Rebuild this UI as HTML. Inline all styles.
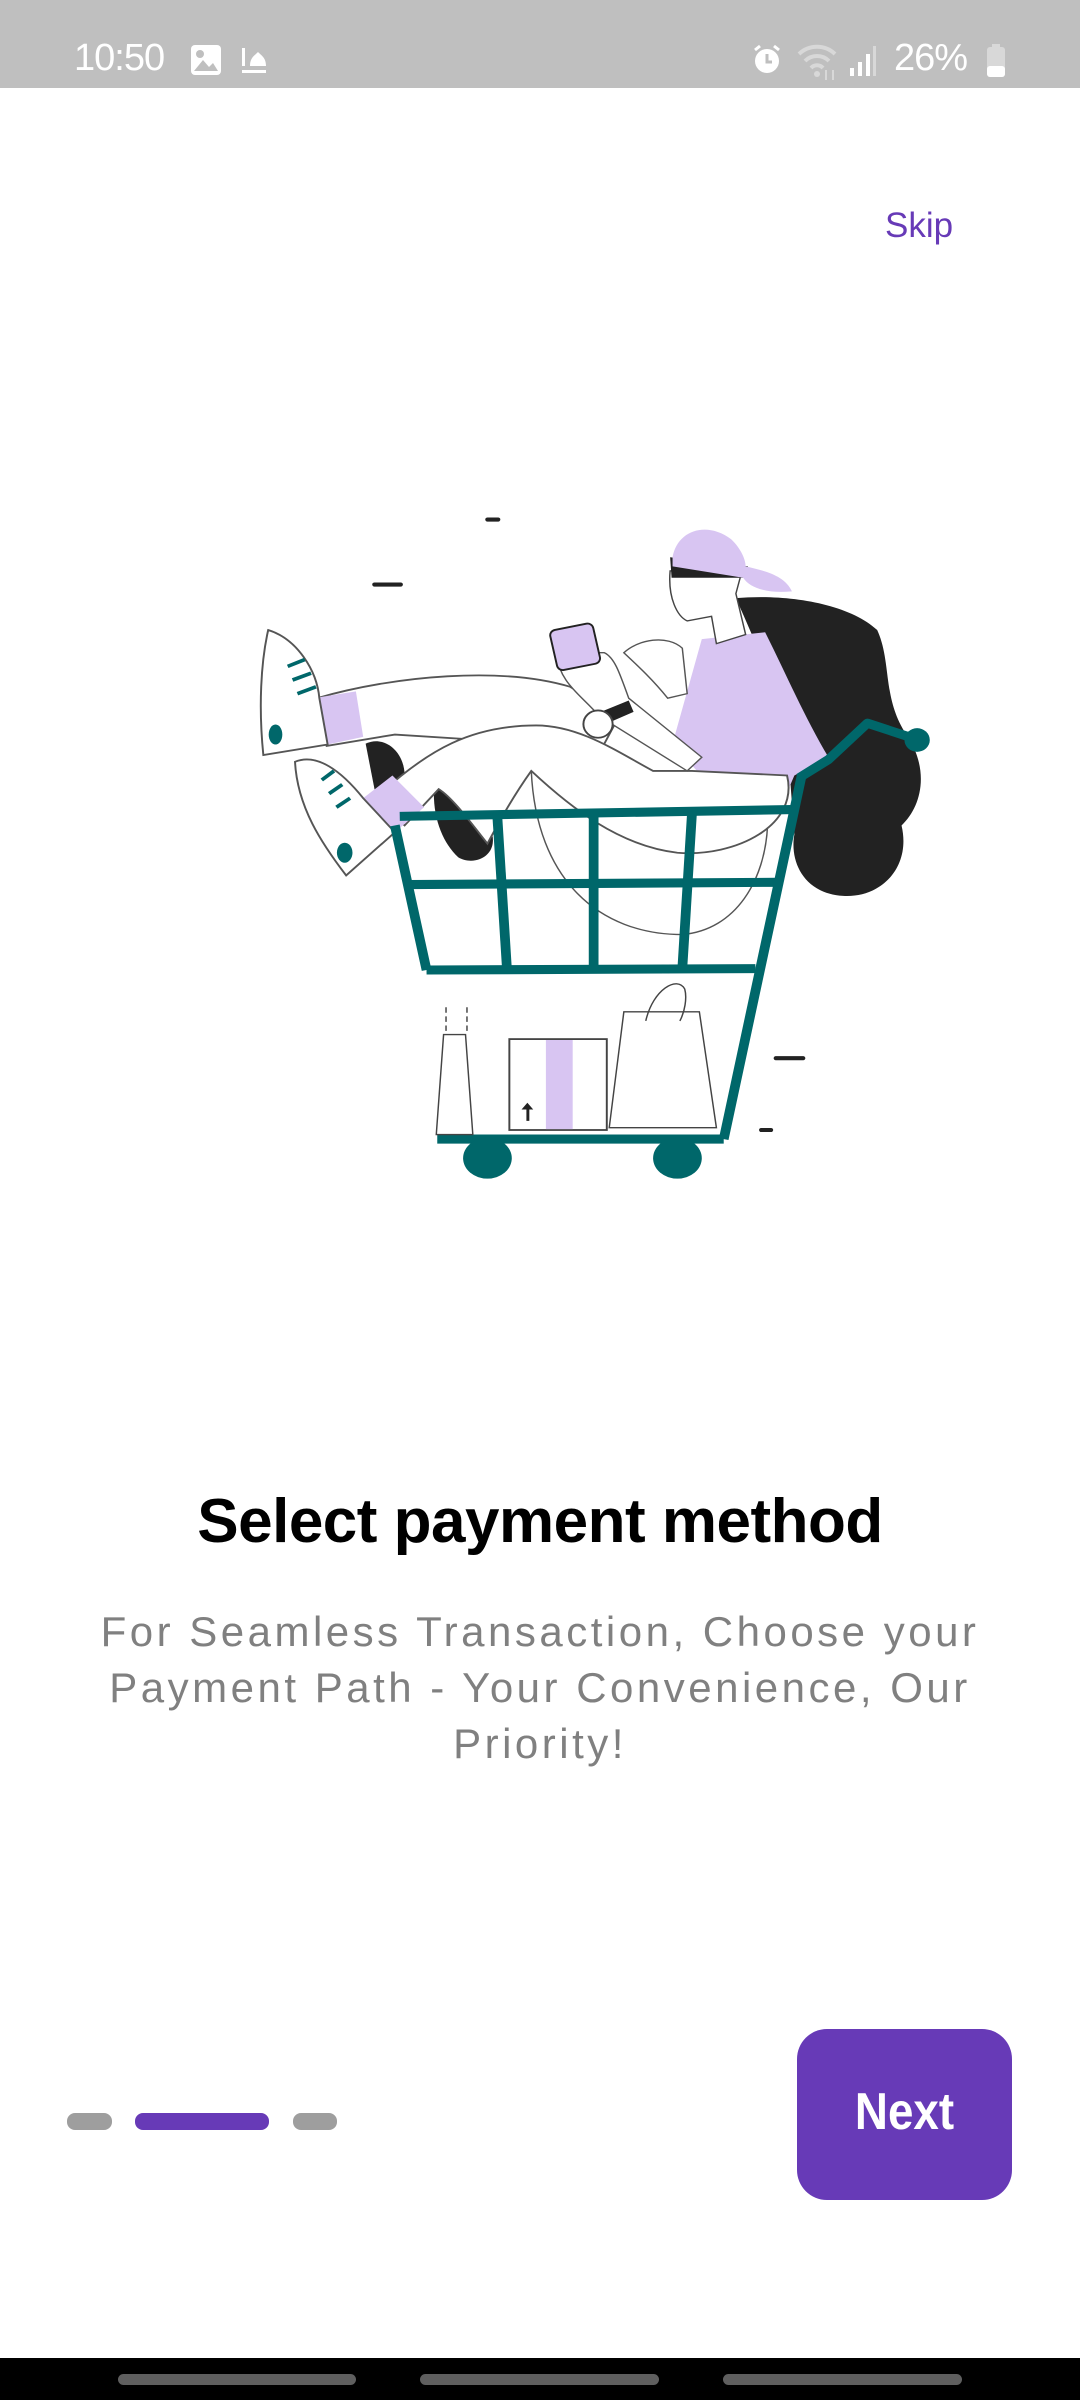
<!DOCTYPE html>
<html><head><meta charset="utf-8"><style>
*{margin:0;padding:0;box-sizing:border-box}
body{width:1080px;height:2400px;background:#fff;position:relative;overflow:hidden;font-family:"Liberation Sans",sans-serif}
.sb{position:absolute;left:0;top:0;width:1080px;height:88px;background:#bfbfbf;color:#fff}
.abs{position:absolute}
</style></head><body>
<div class="sb">
  <div class="abs" style="left:74px;top:38px;font-size:38px;line-height:40px;letter-spacing:-1px">10:50</div>
  <svg class="abs" style="left:190px;top:44px" width="32" height="32" viewBox="0 0 32 32"><rect x="1" y="1" width="30" height="30" rx="4" fill="#fff"/><circle cx="10" cy="10" r="4" fill="#bfbfbf"/><path d="M4 27 L13 16 L19 23 L23 19 L28 27Z" fill="#bfbfbf"/></svg>
  <svg class="abs" style="left:240px;top:46px" width="30" height="30" viewBox="0 0 30 30"><rect x="2" y="2" width="3" height="18" fill="#fff"/><path d="M10 20 C10 12 14 10 18 6 C22 10 26 12 26 20Z" fill="#fff"/><rect x="2" y="24" width="24" height="3" fill="#fff"/></svg>
  <svg class="abs" style="left:752px;top:44px" width="30" height="32" viewBox="0 0 30 32"><circle cx="15" cy="17" r="12" fill="#fff"/><path d="M15 10 V18 H20" stroke="#bfbfbf" stroke-width="3" fill="none"/><path d="M3 6 L8 2 M27 6 L22 2" stroke="#fff" stroke-width="3"/></svg>
  <svg class="abs" style="left:797px;top:42px" width="44" height="40" viewBox="0 0 44 40"><path d="M2 12 A26 26 0 0 1 38 12" stroke="#d8d8d8" stroke-width="4" fill="none"/><path d="M8 19 A17 17 0 0 1 32 19" stroke="#d8d8d8" stroke-width="4" fill="none"/><path d="M14 26 A8 8 0 0 1 26 26" stroke="#d8d8d8" stroke-width="4" fill="none"/><circle cx="20" cy="32" r="3" fill="#d8d8d8"/><path d="M29 28 V38 M36 38 V28" stroke="#d8d8d8" stroke-width="2"/></svg>
  <svg class="abs" style="left:848px;top:44px" width="30" height="34" viewBox="0 0 30 34"><rect x="2" y="24" width="4" height="8" fill="#fff"/><rect x="10" y="18" width="4" height="14" fill="#fff"/><rect x="18" y="10" width="4" height="22" fill="#fff"/><rect x="25" y="2" width="3" height="30" fill="#d8d8d8"/></svg>
  <div class="abs" style="left:894px;top:38px;font-size:38px;line-height:40px;letter-spacing:-1px">26%</div>
  <svg class="abs" style="left:986px;top:44px" width="20" height="34" viewBox="0 0 20 34"><rect x="6" y="0" width="8" height="4" fill="#d8d8d8"/><rect x="1" y="3" width="18" height="30" rx="3" fill="#d8d8d8"/><rect x="1" y="22" width="18" height="11" rx="3" fill="#fff"/></svg>
</div>

<div class="abs" style="left:885px;top:206px;font-size:35px;line-height:40px;color:#673ab7">Skip</div>

<svg class="abs" style="left:200px;top:480px" width="760" height="700" viewBox="0 0 1560 1540" preserveAspectRatio="none">
  <g stroke="#222" stroke-width="9" stroke-linecap="round"><line x1="590" y1="87" x2="612" y2="87"/><line x1="358" y1="230" x2="412" y2="230"/><line x1="1182" y1="1272" x2="1238" y2="1272"/><line x1="1152" y1="1430" x2="1172" y2="1430"/></g>
  <path d="M1100,260 C1200,250 1330,270 1390,330 C1420,400 1400,480 1450,560 C1500,640 1480,720 1440,760 C1460,850 1400,920 1320,915 C1240,910 1210,840 1220,780 L1210,640 C1200,500 1150,380 1100,260 Z" fill="#222"/>
  <path d="M680,640 C690,880 820,1000 990,1000 C1100,990 1160,880 1165,760" stroke="#555" stroke-width="3" fill="none"/>
  <path d="M1030,350 L1160,335 C1200,420 1240,520 1290,610 L1220,650 L1200,700 L1080,690 L1020,640 L970,580 Z" fill="#d8c5f2"/>
  <path d="M965,200 C960,260 980,300 1000,310 L1050,300 L1060,360 L1120,340 L1100,250 L1115,190 Z" fill="#fff" stroke="#444" stroke-width="3"/>
  <path d="M965,170 L1125,190 L1115,215 L968,215 Z" fill="#222"/>
  <path d="M970,170 C980,110 1040,90 1090,130 C1110,150 1120,175 1120,190 C1160,200 1200,210 1215,245 C1170,250 1130,240 1115,215 L970,190 Z" fill="#d8c5f2"/>
  <path d="M240,480 C400,430 620,410 760,455 L860,520 L820,600 L620,575 L400,560 L260,585 Z" fill="#fff" stroke="#555" stroke-width="4"/>
  <path d="M340,580 C380,560 420,600 420,650 L360,690 Z" fill="#222"/>
  <path d="M480,690 C520,650 570,720 600,780 C610,830 560,850 530,830 C500,800 480,750 480,690Z" fill="#222"/>
  <path d="M360,700 C470,590 560,540 690,540 C780,540 860,600 930,640 L1010,640 L1205,650 C1230,760 1100,830 980,820 C860,805 760,720 680,640 C640,700 610,760 590,800 C560,760 520,700 490,680 L420,760 Z" fill="#fff" stroke="#555" stroke-width="4"/>
  <path d="M245,478 L320,465 L335,565 L262,582 Z" fill="#d8c5f2"/>
  <path d="M335,700 L395,650 L460,720 L400,775 Z" fill="#d8c5f2"/>
  <path d="M140,330 C200,350 240,420 245,480 L262,582 L130,605 C120,500 125,400 140,330Z" fill="#fff" stroke="#555" stroke-width="4"/>
  <g stroke="#00676a" stroke-width="8" fill="none"><path d="M180,410 L215,395"/><path d="M190,440 L228,425"/><path d="M200,470 L238,455"/></g>
  <ellipse cx="155" cy="560" rx="14" ry="22" fill="#00676a"/>
  <path d="M195,620 C240,600 290,640 335,700 L400,775 L300,870 C250,800 200,720 195,620Z" fill="#fff" stroke="#555" stroke-width="4"/>
  <g stroke="#00676a" stroke-width="8" fill="none"><path d="M250,660 L275,640"/><path d="M265,690 L292,670"/><path d="M280,720 L308,700"/></g>
  <ellipse cx="297" cy="820" rx="16" ry="22" fill="#00676a"/>
  <path d="M730,380 C740,450 780,470 820,520 L1000,640 L1030,610 L880,480 C860,420 850,390 830,380 Z" fill="#fff" stroke="#555" stroke-width="3"/>
  <path d="M870,380 C900,350 960,340 990,370 L1000,470 L960,480 C930,440 900,410 870,380Z" fill="#fff" stroke="#555" stroke-width="3"/>
  <rect x="725" y="322" width="90" height="90" rx="12" transform="rotate(-12 770 367)" fill="#d8c5f2" stroke="#222" stroke-width="4"/>
  <path d="M800,520 L880,485 L890,510 L815,545Z" fill="#222"/>
  <circle cx="817" cy="537" r="30" fill="#fff" stroke="#444" stroke-width="4"/>
  <g stroke="#00676a" stroke-width="20" fill="none" stroke-linejoin="round">
    <path d="M410,740 L1215,725"/>
    <path d="M430,890 L1185,885"/>
    <path d="M465,1078 L1140,1075"/>
    <path d="M400,760 L465,1078"/>
    <path d="M610,735 L630,1075"/>
    <path d="M808,730 L808,1075"/>
    <path d="M1010,730 L990,1075"/>
    <path d="M1235,650 L1075,1450"/>
    <path d="M1230,655 L1290,615 L1370,535 L1455,565"/>
    <path d="M487,1450 L1075,1450"/>
  </g>
  <circle cx="1472" cy="572" r="26" fill="#00676a"/>
  <ellipse cx="590" cy="1492" rx="50" ry="45" fill="#00676a"/>
  <ellipse cx="980" cy="1492" rx="50" ry="45" fill="#00676a"/>
  <path d="M500,1220 L545,1220 L560,1440 L485,1440 Z" fill="#fff" stroke="#444" stroke-width="3"/>
  <path d="M505,1160 L505,1215 M548,1160 L548,1215" stroke="#444" stroke-width="3" stroke-dasharray="12 8"/>
  <rect x="635" y="1230" width="200" height="200" fill="#fff" stroke="#444" stroke-width="4"/>
  <rect x="710" y="1232" width="55" height="196" fill="#d8c5f2"/>
  <path d="M670,1410 V1385 H660 L672,1370 L684,1385 H676 V1410Z" fill="#222"/>
  <path d="M870,1170 L1025,1170 L1060,1425 L840,1425 Z" fill="#fff" stroke="#444" stroke-width="3"/>
  <path d="M915,1190 C930,1120 980,1090 995,1120 C1000,1140 995,1170 985,1190" stroke="#444" stroke-width="3" fill="none"/>
</svg>

<div class="abs" style="left:0;width:1080px;top:1487px;text-align:center;font-size:62px;line-height:70px;font-weight:bold;color:#000;letter-spacing:-0.5px">Select payment method</div>
<div class="abs" style="left:0;width:1080px;top:1604px;text-align:center;font-size:42px;line-height:56px;color:#808080;letter-spacing:3.5px;white-space:nowrap">For Seamless Transaction, Choose your<br>Payment Path - Your Convenience, Our<br>Priority!</div>

<div class="abs" style="left:67px;top:2113px;width:45px;height:17px;border-radius:8px;background:#9e9e9e"></div>
<div class="abs" style="left:135px;top:2113px;width:134px;height:17px;border-radius:8px;background:#673ab7"></div>
<div class="abs" style="left:293px;top:2113px;width:44px;height:17px;border-radius:8px;background:#9e9e9e"></div>

<div class="abs" style="left:797px;top:2029px;width:215px;height:171px;border-radius:30px;background:#673ab7"></div>
<div class="abs" style="left:797px;top:2082px;width:215px;text-align:center;color:#fff;font-weight:bold;font-size:52px;line-height:60px;transform:scaleX(0.88)">Next</div>

<div class="abs" style="left:0;top:2358px;width:1080px;height:42px;background:#000"></div>
<div class="abs" style="left:118px;top:2374px;width:238px;height:11px;border-radius:6px;background:#5f5f5f"></div>
<div class="abs" style="left:420px;top:2374px;width:239px;height:11px;border-radius:6px;background:#5f5f5f"></div>
<div class="abs" style="left:723px;top:2374px;width:239px;height:11px;border-radius:6px;background:#5f5f5f"></div>
</body></html>
